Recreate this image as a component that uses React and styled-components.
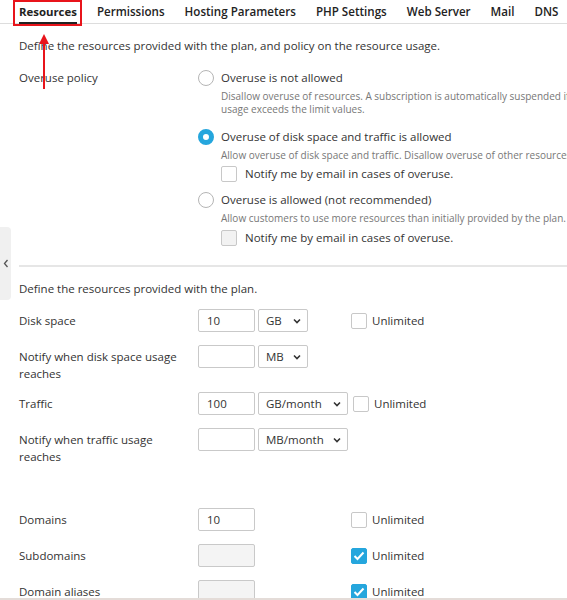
import styled, { createGlobalStyle } from 'styled-components';

const GlobalStyle = createGlobalStyle`
  html, body {
    margin: 0;
    padding: 0;
    background: #fff;
    overflow: hidden;
  }
  body {
    font-family: 'Open Sans', 'Liberation Sans', sans-serif;
    color: #333;
  }
`;

const Page = styled.div`
  position: relative;
  width: 567px;
  height: 600px;
  overflow: hidden;
  border-bottom: 2px solid #e4dcd8;
  box-sizing: border-box;
`;

const TabBar = styled.div`
  display: flex;
  gap: 20px;
  padding-left: 19px;
  height: 23px;
  border-bottom: 1px solid #ddd;
  white-space: nowrap;
`;

const Tab = styled.div`
  position: relative;
  font-size: ${(p) => (p.$active ? 11.4 : 11.6)}px;
  font-weight: ${(p) => (p.$active ? 700 : 600)};
  color: #222;
  line-height: 18px;
  padding-top: 3px;
  box-sizing: border-box;
  height: ${(p) => (p.$active ? '25px' : '21px')};
  border-bottom: ${(p) => (p.$active ? '3px solid #222' : 'none')};
`;

const Highlight = styled.div`
  position: absolute;
  left: -6px;
  right: -5px;
  top: 0;
  height: 26px;
  border: 2px solid #e8141b;
  box-sizing: border-box;
`;

const Arrow = styled.svg`
  position: absolute;
  left: 38px;
  top: 30px;
`;

const Content = styled.div`
  padding-left: 19px;
  width: 600px;
  font-size: 11.5px;
`;

const Intro = styled.div`
  line-height: 18px;
  margin-top: 13px;
`;

const PolicyRow = styled.div`
  display: grid;
  grid-template-columns: 179px 1fr;
  margin-top: 14px;
`;

const Label = styled.div`
  line-height: 17px;
  padding-top: ${(p) => (p.$top ?? 3)}px;
  padding-right: 10px;
`;

const Options = styled.div`
  display: flex;
  flex-direction: column;
`;

const Option = styled.div`
  margin-bottom: ${(p) => p.$mb}px;
`;

const OptionHead = styled.div`
  display: flex;
  align-items: center;
  gap: 7px;
  line-height: 18px;
`;

const Radio = styled.span`
  width: 16px;
  height: 16px;
  border-radius: 50%;
  box-sizing: border-box;
  border: ${(p) => (p.$checked ? '5px solid #25a6dd' : '1px solid #b5b5b5')};
  background: #fff;
  flex: none;
`;

const Desc = styled.div`
  margin-left: 23px;
  margin-top: 3px;
  font-size: 10px;
  line-height: 13px;
  color: #777;
  width: 360px;
`;

const CheckLine = styled.div`
  display: flex;
  align-items: center;
  gap: 8px;
  margin-left: 23px;
  margin-top: ${(p) => p.$mt}px;
  line-height: 18px;
`;

const Box = styled.span`
  width: 16px;
  height: 16px;
  box-sizing: border-box;
  border: 1px solid ${(p) => (p.$checked ? '#25a6dd' : '#c8c8c8')};
  border-radius: 2px;
  background: ${(p) => (p.$checked ? '#25a6dd' : p.$disabled ? '#f2f2f2' : '#fff')};
  display: flex;
  align-items: center;
  justify-content: center;
  flex: none;
`;

const Divider = styled.div`
  border-top: 2px solid #e6e6e6;
  margin-top: 18px;
`;

const Section = styled.div`
  line-height: 18px;
  margin-top: 13px;
  margin-bottom: 11px;
`;

const FieldRow = styled.div`
  display: grid;
  grid-template-columns: 179px auto;
  align-items: start;
  margin-bottom: ${(p) => p.$mb ?? 13}px;
`;

const Controls = styled.div`
  display: flex;
  align-items: center;
`;

const Input = styled.div`
  width: 57px;
  height: 23px;
  box-sizing: border-box;
  border: 1px solid #c9c9c9;
  border-radius: 2px;
  background: ${(p) => (p.$disabled ? '#f4f4f4' : '#fff')};
  padding-left: 8px;
  line-height: 21px;
`;

const Select = styled.div`
  width: ${(p) => p.$w}px;
  height: 23px;
  margin-left: 3px;
  box-sizing: border-box;
  border: 1px solid #c9c9c9;
  border-radius: 2px;
  padding: 0 6px 0 7px;
  display: flex;
  align-items: center;
  justify-content: space-between;
  line-height: 21px;
`;

const Unlimited = styled.label`
  display: flex;
  align-items: center;
  gap: 5px;
  margin-left: ${(p) => p.$ml}px;
`;

const Spacer = styled.div`
  height: ${(p) => p.$h}px;
`;

const Handle = styled.div`
  position: absolute;
  left: 0;
  top: 227px;
  width: 11px;
  height: 73px;
  background: #f0f0f0;
  border-radius: 0 4px 4px 0;
  display: flex;
  align-items: center;
  justify-content: center;
`;

const Chevron = () => (
  <svg width="8" height="6" viewBox="0 0 8 6">
    <path d="M1 1.5 L4 4.5 L7 1.5" stroke="#333" strokeWidth="1.6" fill="none" />
  </svg>
);

const Check = () => (
  <svg width="12" height="10" viewBox="0 0 12 10">
    <path d="M1.5 5 L4.5 8 L10.5 1.5" stroke="#fff" strokeWidth="2" fill="none" />
  </svg>
);

const tabs = ['Resources', 'Permissions', 'Hosting Parameters', 'PHP Settings', 'Web Server', 'Mail', 'DNS'];

function Field({ label, value, unit, unitW, unlimited, ml = 43, disabled, checked, mb }) {
  return (
    <FieldRow $mb={mb}>
      <Label>{label}</Label>
      <Controls>
        <Input $disabled={disabled}>{value}</Input>
        {unit && (
          <Select $w={unitW}>
            <span>{unit}</span>
            <Chevron />
          </Select>
        )}
        {unlimited && (
          <Unlimited $ml={ml}>
            <Box $checked={checked}>{checked && <Check />}</Box>
            Unlimited
          </Unlimited>
        )}
      </Controls>
    </FieldRow>
  );
}

export default function App() {
  return (
    <Page>
      <GlobalStyle />
      <TabBar>
        {tabs.map((t, i) => (
          <Tab key={t} $active={i === 0}>
            {t}
            {i === 0 && <Highlight />}
          </Tab>
        ))}
      </TabBar>
      <Arrow width="12" height="60" viewBox="0 0 12 60">
        <path d="M6 4 L1 14 L11 14 Z" fill="#e8141b" />
        <line x1="6" y1="12" x2="6" y2="59" stroke="#e8141b" strokeWidth="2" />
      </Arrow>
      <Handle>
        <svg width="6" height="9" viewBox="0 0 6 9">
          <path d="M4.5 1 L1.5 4.5 L4.5 8" stroke="#555" strokeWidth="1.3" fill="none" />
        </svg>
      </Handle>
      <Content>
        <Intro>Define the resources provided with the plan, and policy on the resource usage.</Intro>
        <PolicyRow>
          <Label $top={0}>Overuse policy</Label>
          <Options>
            <Option $mb={12}>
              <OptionHead>
                <Radio />
                Overuse is not allowed
              </OptionHead>
              <Desc>
                Disallow overuse of resources. A subscription is automatically suspended if usage exceeds the limit values.
              </Desc>
            </Option>
            <Option $mb={8}>
              <OptionHead>
                <Radio $checked />
                Overuse of disk space and traffic is allowed
              </OptionHead>
              <Desc>Allow overuse of disk space and traffic. Disallow overuse of other resources.</Desc>
              <CheckLine $mt={3}>
                <Box />
                Notify me by email in cases of overuse.
              </CheckLine>
            </Option>
            <Option $mb={0}>
              <OptionHead>
                <Radio />
                Overuse is allowed (not recommended)
              </OptionHead>
              <Desc>Allow customers to use more resources than initially provided by the plan.</Desc>
              <CheckLine $mt={4}>
                <Box $disabled />
                Notify me by email in cases of overuse.
              </CheckLine>
            </Option>
          </Options>
        </PolicyRow>
        <Divider />
        <Section>Define the resources provided with the plan.</Section>
        <Field label="Disk space" value="10" unit="GB" unitW={50} unlimited />
        <Field label="Notify when disk space usage reaches" unit="MB" unitW={50} mb={10} />
        <Field label="Traffic" value="100" unit="GB/month" unitW={90} unlimited ml={5} />
        <Field label="Notify when traffic usage reaches" unit="MB/month" unitW={90} mb={10} />
        <Spacer $h={33} />
        <Field label="Domains" value="10" unlimited ml={96} />
        <Field label="Subdomains" disabled unlimited checked ml={96} />
        <Field label="Domain aliases" disabled unlimited checked ml={96} />
      </Content>
    </Page>
  );
}
